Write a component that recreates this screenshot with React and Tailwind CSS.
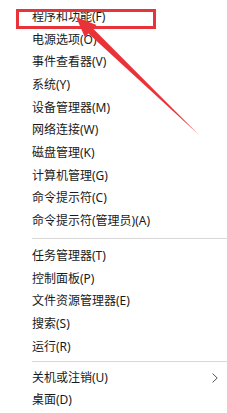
import React from "react";

const group1 = [
  "程序和功能(F)",
  "电源选项(O)",
  "事件查看器(V)",
  "系统(Y)",
  "设备管理器(M)",
  "网络连接(W)",
  "磁盘管理(K)",
  "计算机管理(G)",
  "命令提示符(C)",
  "命令提示符(管理员)(A)",
];
const group2 = ["任务管理器(T)", "控制面板(P)", "文件资源管理器(E)", "搜索(S)", "运行(R)"];

function Item({ label, arrow }) {
  return (
    <div className="h-[22.7px] flex items-center pl-[32px] pr-[9px] text-[12px] leading-none text-[#1a1a1a]">
      <span className="flex-1 whitespace-nowrap">{label}</span>
      {arrow && (
        <svg width="6" height="10" viewBox="0 0 6 10" className="mr-[0px]">
          <path d="M0.6 0.6 L5.2 5 L0.6 9.4" fill="none" stroke="#555" strokeWidth="1" />
        </svg>
      )}
    </div>
  );
}

function Sep({ cls }) {
  return <div className={"ml-[32px] h-px bg-[#d8d8d8] " + cls} />;
}

export default function App() {
  return (
    <div
      className="relative w-[227px] h-[413px] bg-white overflow-hidden pt-[5.6px]"
      style={{ fontFamily: '"Noto Sans", "Noto Sans CJK SC", sans-serif' }}
    >
      {group1.map((t) => (
        <Item key={t} label={t} />
      ))}
      <Sep cls="mt-[5.5px] mb-[5.5px]" />
      {group2.map((t) => (
        <Item key={t} label={t} />
      ))}
      <Sep cls="mt-[3.5px] mb-[4px]" />
      <Item label="关机或注销(U)" arrow />
      <Item label="桌面(D)" />

      <div className="absolute left-[16px] top-[9px] w-[140px] h-[20px] border-[3px] border-[#e8333b]" />
      <svg className="absolute left-0 top-0" width="227" height="413" viewBox="0 0 227 413">
        <polygon
          points="76,17 96.5,25 93,28.6 198.5,134.5 88.4,33.4 85,37.5"
          fill="#ea3339"
        />
      </svg>
    </div>
  );
}
